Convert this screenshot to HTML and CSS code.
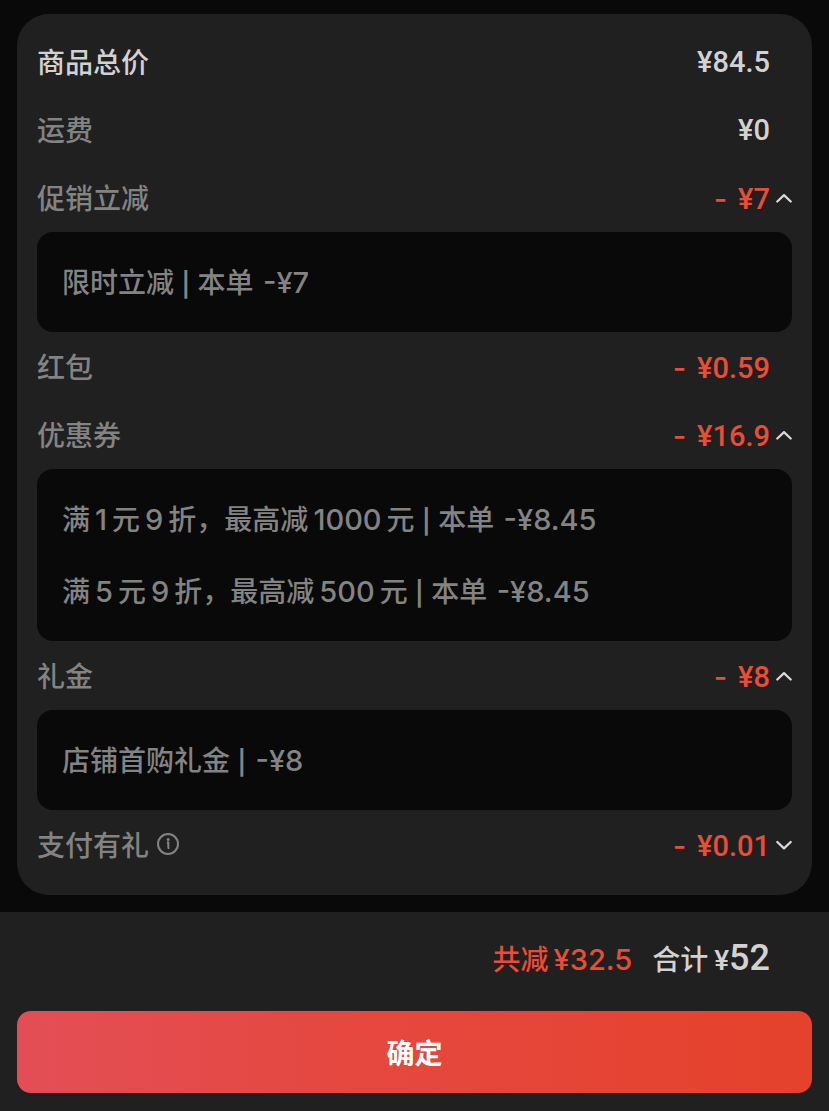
FILE: index.html
```html
<!DOCTYPE html>
<html lang="zh-CN">
<head>
    <meta charset="UTF-8">
    <meta name="viewport" content="width=device-width, initial-scale=1.0">
    <title>金额明细</title>
    <link rel="stylesheet" href="styles.css">
</head>
<body>
    <main class="bill">
        <section class="card">
            <div class="row row-main">
                <span class="label">商品总价</span>
                <span class="price">¥84.5</span>
            </div>
            <div class="row">
                <span class="label">运费</span>
                <span class="price">¥0</span>
            </div>

            <details open>
                <summary class="row">
                    <span class="label">促销立减</span>
                    <span class="price discount"><span class="minus">-</span>¥7</span>
                    <svg class="arrow" viewBox="0 0 16 16"><path d="M1.3 11.5L8 5.2l6.7 6.3"/></svg>
                </summary>
                <ul class="detail">
                    <li>限时立减 <span class="bar">|</span> 本单 <span class="money">-¥7</span></li>
                </ul>
            </details>

            <div class="row">
                <span class="label">红包</span>
                <span class="price discount"><span class="minus">-</span>¥0.59</span>
            </div>

            <details open>
                <summary class="row">
                    <span class="label">优惠券</span>
                    <span class="price discount"><span class="minus">-</span>¥16.9</span>
                    <svg class="arrow" viewBox="0 0 16 16"><path d="M1.3 11.5L8 5.2l6.7 6.3"/></svg>
                </summary>
                <ul class="detail">
                    <li>满<span class="num">1</span>元<span class="num">9</span>折，最高减<span class="num">1000</span>元 <span class="bar">|</span> 本单 <span class="money">-¥8.45</span></li>
                    <li>满<span class="num">5</span>元<span class="num">9</span>折，最高减<span class="num">500</span>元 <span class="bar">|</span> 本单 <span class="money">-¥8.45</span></li>
                </ul>
            </details>

            <details open>
                <summary class="row">
                    <span class="label">礼金</span>
                    <span class="price discount"><span class="minus">-</span>¥8</span>
                    <svg class="arrow" viewBox="0 0 16 16"><path d="M1.3 11.5L8 5.2l6.7 6.3"/></svg>
                </summary>
                <ul class="detail">
                    <li>店铺首购礼金 <span class="bar">|</span> <span class="money">-¥8</span></li>
                </ul>
            </details>

            <details>
                <summary class="row">
                    <span class="label">支付有礼
                        <svg class="info" viewBox="0 0 22 22">
                            <circle cx="11" cy="11" r="10"/>
                            <path d="M9.8 9.6h1.5v4.8q0 .9 1.1.9"/>
                            <circle class="dot" cx="11.2" cy="6.6" r="1.5"/>
                        </svg>
                    </span>
                    <span class="price discount"><span class="minus">-</span>¥0.01</span>
                    <svg class="arrow" viewBox="0 0 16 16"><path d="M1.3 5L8 11.3 14.7 5"/></svg>
                </summary>
            </details>
        </section>
    </main>

    <footer>
        <p class="total">
            <span class="saved">共减<span class="num">¥32.5</span></span>
            <span class="sum">合计<span class="sum-price">¥<strong>52</strong></span></span>
        </p>
        <button class="confirm-btn" type="button">确定</button>
    </footer>
</body>
</html>
```
FILE: styles.css
```css
* {
    margin: 0;
    padding: 0;
    box-sizing: border-box;
}

body {
    display: flex;
    flex-direction: column;
    min-height: 100vh;
    background: #090909;
    color: #838383;
    font-family: Inter, "Noto Sans CJK SC", sans-serif;
    font-size: 28px;
    font-weight: 500;
}

.bill {
    flex: 1;
    padding: 14px 17px 17px;
}

.card {
    padding: 14px 20px 16px;
    background: #202020;
    border-radius: 32px;
}

.row {
    display: flex;
    align-items: center;
    height: 68px;
    padding-right: 22px;
    list-style: none;
}

.row::-webkit-details-marker {
    display: none;
}

summary.row {
    padding-right: 0;
    cursor: pointer;
}

.label {
    display: flex;
    align-items: center;
    gap: 8px;
    flex: 1;
    padding-bottom: 2px;
}

.row-main .label {
    color: #d2d2d2;
}

.price {
    color: #d2d2d2;
    font-family: Roboto, "Noto Sans CJK SC", sans-serif;
    font-size: 29px;
}

.discount {
    color: #ea4c36;
}

.minus {
    margin-right: 11px;
    font-family: Inter, sans-serif;
}

.arrow {
    width: 16px;
    height: 16px;
    margin-left: 6px;
    fill: none;
    stroke: #d8d8d8;
    stroke-width: 2.3;
    stroke-linecap: round;
    stroke-linejoin: round;
}

.info {
    width: 22px;
    height: 22px;
    fill: none;
    stroke: #838383;
    stroke-width: 2;
}

.info .dot {
    fill: #838383;
    stroke: none;
}

/* expanded discount list */
.detail {
    margin-bottom: 1px;
    padding: 15px 25px 13px;
    background: #090909;
    border-radius: 16px;
    list-style: none;
}

.detail li {
    line-height: 72px;
}

.bar {
    font-size: 24px;
    font-weight: 600;
    line-height: 1;
}

.num,
.money {
    font-size: 29px;
    line-height: 1;
}

.num {
    margin: 0 5px;
}

.money {
    margin-left: 2px;
}

footer {
    padding: 0 17px 18px;
    background: #202020;
}

.total {
    display: flex;
    justify-content: flex-end;
    align-items: baseline;
    gap: 15px;
    height: 99px;
    padding-right: 42px;
    line-height: 92px;
}

.saved {
    color: #ea4c36;
}

.sum {
    color: #d2d2d2;
}

.sum-price {
    margin-left: 6px;
    font-family: Roboto, sans-serif;
}

.sum-price strong {
    font-size: 36px;
    font-weight: 500;
}

.confirm-btn {
    display: block;
    width: 100%;
    height: 82px;
    border: none;
    border-radius: 14px;
    background: linear-gradient(to right, #e34e56, #e54840 40%, #e5422c);
    color: #fff;
    font-family: "Noto Sans CJK SC", sans-serif;
    font-size: 28px;
    font-weight: bold;
    cursor: pointer;
}
```
